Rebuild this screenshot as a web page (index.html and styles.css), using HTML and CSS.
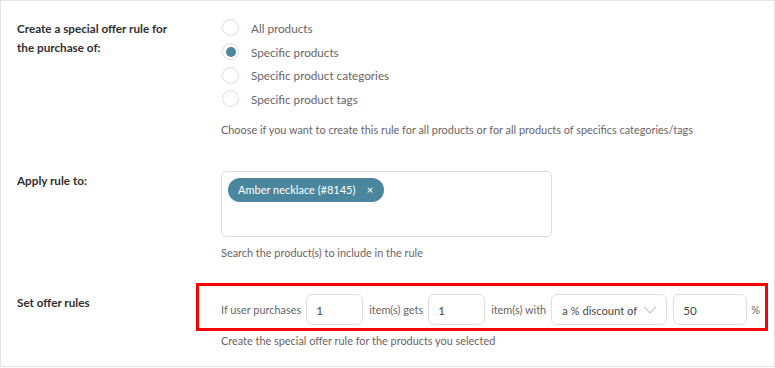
FILE: index.html
```html
<!DOCTYPE html>
<html>
<head>
<meta charset="utf-8">
<link rel="stylesheet" href="styles.css">
</head>
<body>
<div class="card">
  <div class="row row-target">
    <div class="label">Create a special offer rule for the purchase of:</div>
    <div class="field">
      <ul class="radios">
        <li><span class="radio"></span>All products</li>
        <li><span class="radio checked"></span>Specific products</li>
        <li><span class="radio"></span>Specific product categories</li>
        <li><span class="radio"></span>Specific product tags</li>
      </ul>
      <p class="help help-radios">Choose if you want to create this rule for all products or for all products of specifics categories/tags</p>
    </div>
  </div>

  <div class="row row-apply">
    <div class="label">Apply rule to:</div>
    <div class="field">
      <div class="select-box">
        <span class="chip">Amber necklace (#8145)<span class="chip-x">×</span></span>
      </div>
      <p class="help help-apply">Search the product(s) to include in the rule</p>
    </div>
  </div>

  <div class="row row-offer">
    <div class="label label-offer">Set offer rules</div>
    <div class="field">
      <div class="offer-line">
        <span class="txt">If user purchases</span>
        <span class="input w-qty">1</span>
        <span class="txt">item(s) gets</span>
        <span class="input w-qty">1</span>
        <span class="txt">item(s) with</span>
        <span class="input select"><span class="sel-text">a % discount of</span>
          <svg class="chev" width="14" height="8" viewBox="0 0 14 8"><path d="M1 1 L7 7 L13 1" fill="none" stroke="#c8c8c8" stroke-width="1.2"/></svg>
        </span>
        <span class="input w-pct">50</span>
        <span class="txt">%</span>
      </div>
      <p class="help help-offer">Create the special offer rule for the products you selected</p>
    </div>
    <div class="highlight"></div>
  </div>
</div>
</body>
</html>
```
FILE: styles.css
```css
* { box-sizing: border-box; }
html, body { margin: 0; padding: 0; background: #fff; }
body {
  font-family: "Lato", "Open Sans", sans-serif;
  font-size: 12px;
  color: #646464;
}
.card {
  position: relative;
  width: 775px;
  height: 367px;
  border: 1px solid #e4e4e4;
  background: #fff;
}
.row {
  display: grid;
  grid-template-columns: 204px 1fr;
  padding-left: 16px;
}
.label {
  font-size: 11.7px;
  font-weight: 700;
  color: #2f2f2f;
  line-height: 19px;
  width: 160px;
}
.row-target { padding-top: 18px; }
.radios { list-style: none; margin: -3px 0 0 0; padding: 0; }
.radios li {
  display: flex;
  align-items: center;
  height: 23.7px;
  font-size: 11.7px;
  color: #6a6466;
}
.radio {
  width: 17px; height: 17px;
  border: 1px solid #dcdcdc;
  border-radius: 50%;
  margin: 0 12px 0 1px;
  display: inline-flex;
  align-items: center;
  justify-content: center;
  flex: none;
}
.radio.checked::after {
  content: "";
  width: 10px; height: 10px;
  border-radius: 50%;
  background: #4a889f;
}
.help { margin: 0; font-size: 10.9px; line-height: 17px; color: #6a6466; }
.help-radios { margin-top: 10px; }

.row-apply { padding-top: 33px; }
.select-box {
  width: 331px;
  height: 66px;
  border: 1px solid #dedede;
  border-radius: 5px;
  padding: 6px;
}
.chip {
  display: inline-flex;
  align-items: center;
  height: 24px;
  padding: 0 11px 0 10px;
  border-radius: 12px;
  background: #4a879e;
  color: #fff;
  font-size: 11px;
}
.chip-x { margin-left: 11px; font-size: 12px; }
.help-apply { margin-top: 7px; }

.row-offer { padding-top: 33px; }
.label-offer { margin-top: -1px; }
.offer-line {
  display: flex;
  align-items: center;
  height: 31px;
}
.txt { font-size: 10.9px; color: #6a6466; white-space: nowrap; }
.input {
  display: inline-flex;
  align-items: center;
  height: 31px;
  border: 1px solid #dedede;
  border-radius: 6px;
  padding: 2px 9px 0 9px;
  font-size: 11.7px;
  color: #4a4a4a;
  margin: 0 6px 0 5px;
  flex: none;
}
.w-qty { width: 57px; }
.select { width: 116px; font-size: 11.2px; justify-content: space-between; padding-left: 10px; padding-right: 9px; white-space: nowrap; margin-right: 1px; }
.w-pct { width: 74px; margin-right: 4px; }
.help-offer { margin-top: 7px; }
.highlight {
  position: absolute;
  left: 195px;
  top: 282px;
  width: 572px;
  height: 48px;
  border: 3px solid #f00;
  pointer-events: none;
}
```
